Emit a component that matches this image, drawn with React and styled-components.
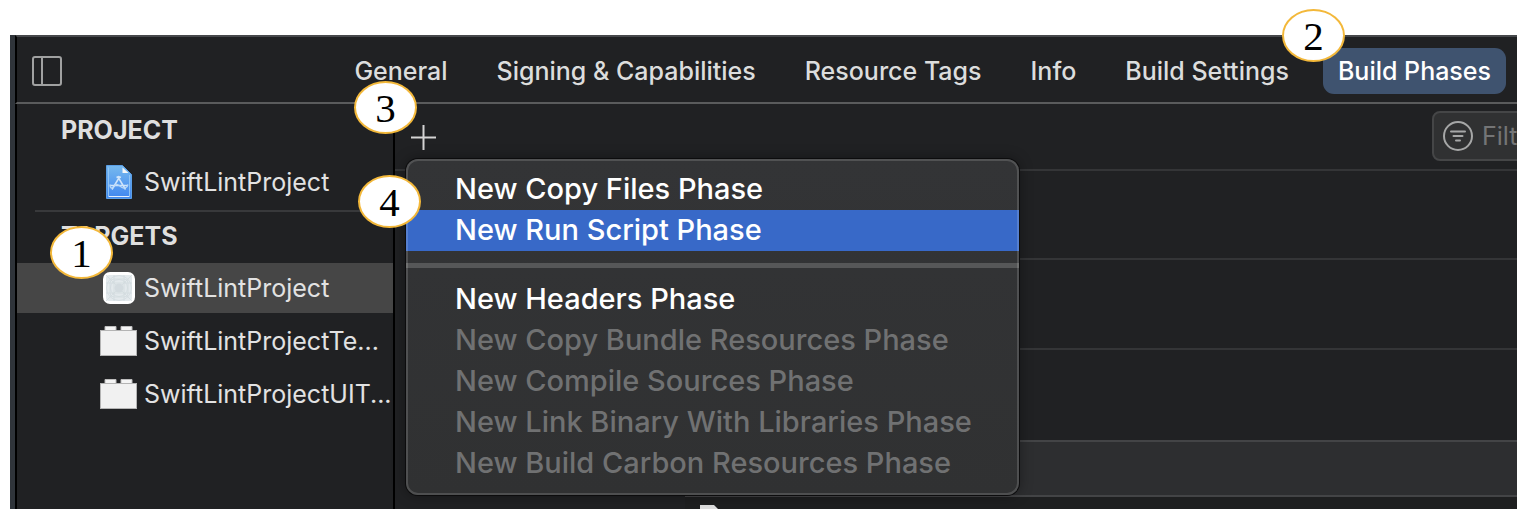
import React from "react";
import styled, { createGlobalStyle, css } from "styled-components";

const GlobalStyle = createGlobalStyle`
  *, *::before, *::after { box-sizing: border-box; }
  body { margin: 0; background: #fff; font-family: Inter, "Liberation Sans", sans-serif; }
  button, input { font-family: inherit; }
  ul { list-style: none; margin: 0; padding: 0; }
`;

const Window = styled.main`
  display: flex;
  flex-direction: column;
  margin: 35px 13px 21px 10px;
  color: #dfdfdf;
  background: #202123;
  border-left: 5px solid #2f343a;
`;

const Header = styled.header`
  display: flex;
  align-items: center;
  justify-content: space-between;
  height: 69px;
  padding: 2px 11px 0 15px;
  border-top: 2px solid #46484b;
  border-bottom: 2px solid #5a5b5c;
  border-left: 2px solid #000;
`;

const IconButton = styled.button`
  display: flex;
  padding: 0;
  border: 0;
  background: none;
`;

const Tabs = styled.nav`
  display: flex;
  gap: 19px;
`;

const Tab = styled.button`
  position: relative;
  height: 46px;
  padding: 0 15px;
  border: 0;
  border-radius: 11px;
  font-size: 25px;
  font-weight: 500;
  line-height: 46px;
  white-space: nowrap;
  color: ${(p) => (p.$active ? "#fff" : "#dcdddd")};
  background: ${(p) => (p.$active ? "#3f536f" : "transparent")};
`;

const Body = styled.div`
  display: flex;
  align-items: stretch;
`;

const Sidebar = styled.aside`
  flex: none;
  width: 380px;
  padding-top: 2px;
  border-left: 2px solid #000;
  border-right: 2px solid #000;
`;

const SidebarTitle = styled.h2`
  margin: 0;
  padding-left: 44px;
  font-size: 25px;
  font-weight: 700;
  line-height: 48px;
`;

const SidebarList = styled.ul`
  display: flex;
  flex-direction: column;
  gap: 3px;
  padding: 3px 0;
`;

const SidebarRow = styled.button`
  position: relative;
  display: flex;
  align-items: center;
  gap: 7px;
  width: 100%;
  height: 50px;
  padding: 0 0 0 83px;
  border: 0;
  font-size: 25px;
  line-height: 50px;
  white-space: nowrap;
  text-align: left;
  color: #e2e2e2;
  background: ${(p) => (p.$active ? "#464646" : "transparent")};
`;

const IconSlot = styled.span`
  display: flex;
  flex: none;
  justify-content: center;
  width: 37px;
`;

const SidebarRule = styled.hr`
  height: 2px;
  margin: 0 0 0 18px;
  border: 0;
  background: #38393b;
`;

const Content = styled.section`
  flex: 1;
  min-width: 0;
`;

const Toolbar = styled.div`
  display: flex;
  align-items: center;
  justify-content: space-between;
  height: 67px;
  padding: 0 0 1px 16px;
  border-bottom: 2px solid #343537;
`;

const AddControl = styled.div`
  position: relative;
  padding-top: 3px;
`;

const FilterClip = styled.div`
  width: 85px;
  overflow: hidden;
`;

const FilterBox = styled.label`
  display: flex;
  align-items: center;
  gap: 9px;
  width: 220px;
  height: 50px;
  padding-left: 9px;
  border: 2px solid #454647;
  border-radius: 8px;
  background: #303132;
`;

const FilterInput = styled.input`
  width: 160px;
  padding: 0;
  border: 0;
  outline: 0;
  font-size: 25px;
  color: #e2e2e2;
  background: none;
  &::placeholder { color: #747576; opacity: 1; }
`;

const PhaseList = styled.div`
  margin-left: 290px;
`;

const PhaseRow = styled.div`
  height: ${(p) => (p.$first ? "89px" : "90px")};
  border-bottom: ${(p) => (p.$last ? "0" : "2px solid #343537")};
`;

const Editor = styled.div`
  height: 57px;
  border-top: 2px solid #434446;
  border-bottom: 2px solid #434446;
  background: #2d2e30;
`;

const FileStrip = styled.div`
  display: flex;
  height: 12px;
  padding: 8px 0 0 15px;
  overflow: hidden;
  background: #1e1f20;
`;

const Menu = styled.div`
  position: absolute;
  z-index: 1;
  top: 37px;
  left: -5px;
  width: 613px;
  padding: 10px 0 11px;
  border-radius: 12px;
  background: linear-gradient(#333436, #303132);
  box-shadow: 0 0 0 1px #0c0c0d, 0 0 14px rgba(0, 0, 0, 0.4);
  &::after {
    content: "";
    position: absolute;
    inset: 0;
    border: 2px solid rgba(255, 255, 255, 0.15);
    border-radius: 12px;
    pointer-events: none;
  }
`;

const MenuItem = styled.button`
  display: block;
  width: 100%;
  height: 41px;
  padding: 0 0 2px 49px;
  border: 0;
  font-size: 29px;
  font-weight: 500;
  line-height: 39px;
  text-align: left;
  white-space: nowrap;
  color: #fff;
  background: none;
  ${(p) => p.$active && css`background: #3869c8;`}
  &:disabled { color: #707172; }
`;

const MenuRule = styled.hr`
  height: 5px;
  margin: 12px 0 11px;
  border: 0;
  background: #565758;
`;

const Badge = styled.span`
  position: absolute;
  z-index: 2;
  top: ${(p) => p.$top}px;
  left: ${(p) => p.$left}px;
  width: 63px;
  height: 53px;
  border: 2px solid #f3b83a;
  border-radius: 50%;
  font-family: "Liberation Serif", serif;
  font-size: 41px;
  font-weight: 400;
  line-height: 51px;
  text-align: center;
  color: #000;
  background: #fff;
`;

const PanelIcon = () => (
  <svg width="30" height="30" viewBox="0 0 30 30" fill="none" stroke="#a0a1a1" strokeWidth="2" aria-hidden="true">
    <rect x="1" y="1" width="28" height="28" rx="2" />
    <path d="M10 1v28" />
  </svg>
);

const PlusIcon = () => (
  <svg width="25" height="25" viewBox="0 0 25 25" stroke="#d4d4d4" strokeWidth="2" aria-hidden="true">
    <path d="M0 12.5h25M12.5 0v25" />
  </svg>
);

const FilterIcon = () => (
  <svg width="30" height="30" viewBox="0 0 30 30" fill="none" stroke="#a6a7a7" strokeWidth="2" strokeLinecap="round" aria-hidden="true">
    <circle cx="15" cy="15" r="14" />
    <path d="M8 10.500h14M10.500 15h9M13 19.500h4" />
  </svg>
);

const ProjectIcon = () => (
  <svg width="26" height="34" viewBox="0 0 26 34" aria-hidden="true">
    <defs>
      <linearGradient id="doc" x1="0" y1="0" x2="0" y2="1">
        <stop offset="0" stopColor="#77b9ee" />
        <stop offset="1" stopColor="#3f86f0" />
      </linearGradient>
    </defs>
    <path d="M0.500 0.500h16l9 9v24h-25z" fill="url(#doc)" stroke="#5b9fe6" />
    <path d="M16.500 2.500v5.500h6z" fill="#f4f6f8" />
    <path d="M2.500 2.500v28.500M23.500 31V10" fill="none" stroke="#8fc4f5" />
    <path d="M2.500 31.500h21" stroke="#e2effc" />
    <path d="M13.500 12L6 24.500M12 12L19.500 24.500M4 20.500h18M10.500 12.500l2-1 2.500 1" fill="none" stroke="#cfe4fa" strokeWidth="1.500" />
    <path d="M4 19.500c0 5 3 4 5 1 2-3 5 1 7 2s5 1 6-3" fill="none" stroke="#b8d8f8" strokeWidth="1.300" />
  </svg>
);

const AppIcon = () => (
  <svg width="32" height="32" viewBox="0 0 32 32" fill="none" aria-hidden="true">
    <rect width="32" height="32" rx="7" fill="#fff" />
    <rect x="3" y="3" width="26" height="26" rx="3" fill="#e3e9ec" />
    <g stroke="#d2dade" strokeWidth="0.800">
      <circle cx="16" cy="16" r="12.500" />
      <circle cx="16" cy="16" r="8.500" />
      <rect x="7" y="7" width="18" height="18" rx="4" />
      <path d="M11 3v26M21 3v26M3 11h26M3 21h26M3 3l26 26M29 3L3 29" />
    </g>
    <circle cx="16" cy="16" r="4.500" fill="#d3dbdf" />
  </svg>
);

const BrickIcon = () => (
  <svg width="37" height="30" viewBox="0 0 37 30" aria-hidden="true">
    <path d="M5 5V0.500h11V5M21 5V0.500h11V5" fill="#f4f4f4" stroke="#bdbdbd" />
    <rect x="0.500" y="4.500" width="36" height="25" fill="#f1f1f1" stroke="#b4b4b4" />
  </svg>
);

const FileIcon = () => (
  <svg width="19" height="24" viewBox="0 0 19 24" aria-hidden="true">
    <path d="M0 0h14l5 5v19H0z" fill="#dedede" />
  </svg>
);

const tabs = ["General", "Signing & Capabilities", "Resource Tags", "Info", "Build Settings", "Build Phases"];

const targets = [
  { name: "SwiftLintProject", icon: <AppIcon />, active: true },
  { name: "SwiftLintProjectTe...", icon: <BrickIcon /> },
  { name: "SwiftLintProjectUIT...", icon: <BrickIcon /> },
];

const unavailable = [
  "New Copy Bundle Resources Phase",
  "New Compile Sources Phase",
  "New Link Binary With Libraries Phase",
  "New Build Carbon Resources Phase",
];

export default function App() {
  return (
    <>
      <GlobalStyle />
      <Window>
        <Header>
          <IconButton aria-label="Toggle sidebar"><PanelIcon /></IconButton>
          <Tabs>
            {tabs.map((name) => {
              const active = name === "Build Phases";
              return (
                <Tab key={name} $active={active}>
                  {name}
                  {active && <Badge $top={-39} $left={-41}>2</Badge>}
                </Tab>
              );
            })}
          </Tabs>
        </Header>
        <Body>
          <Sidebar>
            <SidebarTitle>PROJECT</SidebarTitle>
            <SidebarList>
              <li>
                <SidebarRow>
                  <IconSlot><ProjectIcon /></IconSlot>
                  SwiftLintProject
                </SidebarRow>
              </li>
            </SidebarList>
            <SidebarRule />
            <SidebarTitle>TARGETS</SidebarTitle>
            <SidebarList>
              {targets.map((t) => (
                <li key={t.name}>
                  <SidebarRow $active={t.active}>
                    <IconSlot>{t.icon}</IconSlot>
                    {t.name}
                    {t.active && <Badge $top={-37} $left={33}>1</Badge>}
                  </SidebarRow>
                </li>
              ))}
            </SidebarList>
          </Sidebar>
          <Content>
            <Toolbar>
              <AddControl>
                <IconButton aria-label="Add build phase"><PlusIcon /></IconButton>
                <Badge $top={-41} $left={-57}>3</Badge>
                <Menu role="menu">
                  <Badge $top={16} $left={-48}>4</Badge>
                  <MenuItem role="menuitem">New Copy Files Phase</MenuItem>
                  <MenuItem role="menuitem" $active>New Run Script Phase</MenuItem>
                  <MenuRule />
                  <MenuItem role="menuitem">New Headers Phase</MenuItem>
                  {unavailable.map((name) => (
                    <MenuItem key={name} role="menuitem" disabled>{name}</MenuItem>
                  ))}
                </Menu>
              </AddControl>
              <FilterClip>
                <FilterBox>
                  <FilterIcon />
                  <FilterInput placeholder="Filter" aria-label="Filter" />
                </FilterBox>
              </FilterClip>
            </Toolbar>
            <PhaseList>
              <PhaseRow $first />
              <PhaseRow />
              <PhaseRow $last />
              <Editor />
              <FileStrip><FileIcon /></FileStrip>
            </PhaseList>
          </Content>
        </Body>
      </Window>
    </>
  );
}
